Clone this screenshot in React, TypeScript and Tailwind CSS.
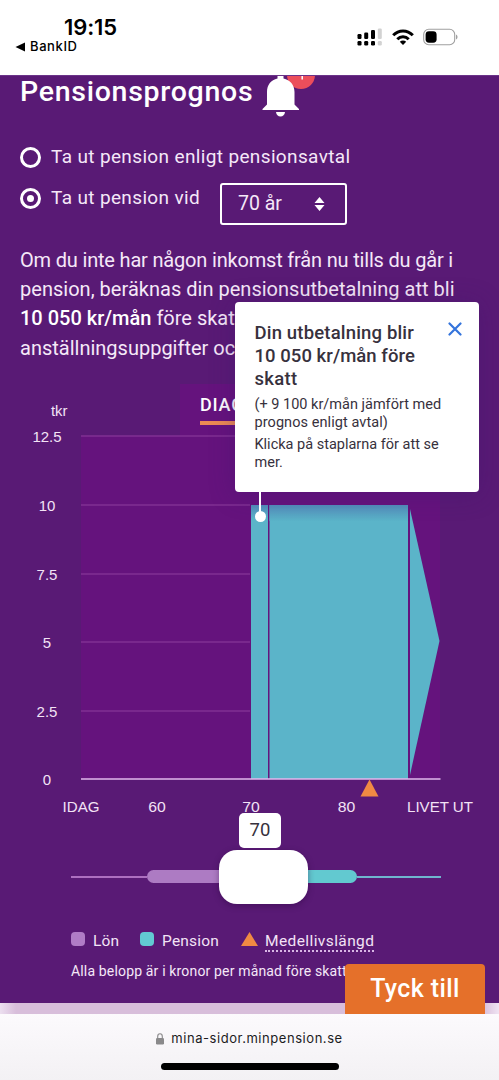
import React from 'react';

const StatusBar: React.FC = () => (
  <header className="flex h-[75px] justify-between bg-white font-[Inter,sans-serif] text-black">
    <div className="pl-[15px] pt-[13px]">
      <div className="pl-[49px] text-[22px] font-semibold leading-7 tracking-[-0.1px]">19:15</div>
      <div className="flex h-3 items-center gap-[5px] text-[13px] font-medium tracking-[0.6px]">
        <svg width="10" height="10" viewBox="0 0 10 10">
          <path d="M0.5 5 10 0.5v9z" />
        </svg>
        BankID
      </div>
    </div>
    <div className="flex gap-[9px] pr-[41px] pt-7">
      <svg width="26" height="18" viewBox="0 0 26 18">
        <rect x="0.5" y="6" width="4" height="5" rx="1.2" />
        <rect x="7.2" y="4.5" width="4" height="6.5" rx="1.2" />
        <rect x="14" y="2" width="4" height="9" rx="1.2" />
        <rect x="20.8" y="0.5" width="4" height="10.5" rx="1.2" fill="#d2d2d2" />
        <rect x="0.5" y="13" width="4" height="4.5" rx="1.2" />
        <rect x="7.2" y="13" width="4" height="4.5" rx="1.2" />
        <rect x="14" y="13" width="4" height="4.5" rx="1.2" />
        <rect x="20.8" y="13" width="4" height="4.5" rx="1.2" fill="#d2d2d2" />
      </svg>
      <svg width="22" height="18" viewBox="0 0 22 18" fill="none" stroke="#000" strokeWidth="3">
        <path d="M1.2 7.3C6.7 1.6 15.3 1.6 20.8 7.3" />
        <path d="M5.3 11.2C8.5 8 13.5 8 16.7 11.2" />
        <path d="M11 17 7.8 13.8c1.8-1.7 4.6-1.7 6.4 0z" fill="#000" stroke="none" />
      </svg>
      <svg width="35" height="18" viewBox="0 0 35 18">
        <rect x="0.7" y="1.3" width="31" height="15.4" rx="5" fill="none" stroke="#a0a0a0" strokeWidth="1.1" />
        <rect x="2.6" y="3.3" width="11" height="11.4" rx="3.4" />
        <path d="M33 6.5c2 .8 2 4.2 0 5z" fill="#a0a0a0" />
      </svg>
    </div>
  </header>
);

const Bell: React.FC = () => (
  <svg className="mt-[-2px]" width="56" height="44" viewBox="0 0 56 44">
    <circle cx="39" cy="1" r="14" fill="#ec4e5b" />
    <path d="M40.2 0v5.5" stroke="#fff" strokeWidth="1.5" />
    <path
      d="M15.5 0h6v4.5c6.5 1.3 11 6.5 11 13.5v12.5l4.500 4.500v1H.5v-1L5 30.500V18C5 11 9 5.800 15.500 4.500z"
      fill="#fff"
    />
    <path d="M14 38h9c-.4 2.800-2 4.500-4.500 4.500S14.400 40.800 14 38z" fill="#fff" />
  </svg>
);

interface RadioProps {
  label: string;
  checked?: boolean;
}

const Radio: React.FC<RadioProps> = ({ label, checked = false }) => (
  <label className="flex h-6 items-center gap-2.5">
    <span className="flex size-[21px] items-center justify-center rounded-full border-[3px] border-white">
      {checked && <span className="size-[7px] rounded-full bg-white" />}
    </span>
    <span className="whitespace-nowrap text-[19px] leading-6 tracking-[0.36px]">{label}</span>
  </label>
);

const ticks = [
  { label: '12.5', y: 56, end: 440 },
  { label: '10', y: 125, end: 250 },
  { label: '7.5', y: 194, end: 250 },
  { label: '5', y: 262, end: 250 },
  { label: '2.5', y: 331, end: 250 },
  { label: '0', y: 399, end: 0 },
];

const ages = [
  { label: 'IDAG', x: 81, width: 37 },
  { label: '60', x: 157, width: 17.5 },
  { label: '70', x: 251, width: 17.5 },
  { label: '80', x: 346.5, width: 17.5 },
  { label: 'LIVET UT', x: 440, width: 66 },
];

const PensionChart: React.FC = () => (
  <svg
    className="block font-['Liberation_Sans',sans-serif]"
    width="499"
    height="440"
    viewBox="0 0 499 440"
    fontSize="15"
    fill="#f3e3f6"
  >
    <defs>
      <linearGradient id="bar-top" x1="0" y1="0" x2="0" y2="1">
        <stop offset="0" stopColor="#528ebb" />
        <stop offset="1" stopColor="#5bb4c9" />
      </linearGradient>
    </defs>
    <rect x="180" y="4" width="199" height="52" fill="#65137d" />
    <rect x="81" y="56" width="359" height="343" fill="#65137d" />
    <text x="51" y="36" textLength="16.5" lengthAdjust="spacingAndGlyphs">tkr</text>
    {ticks.map((tick) => (
      <g key={tick.label}>
        <text x="47" y={tick.y + 6} textAnchor="middle">{tick.label}</text>
        {tick.end > 0 && <path d={`M81 ${tick.y}H${tick.end}`} stroke="#813193" strokeWidth="1.3" />}
      </g>
    ))}
    <text x="200" y="31" fontSize="18" fontWeight="500" letterSpacing="0.8" className="font-[Roboto,sans-serif]" fill="#fff">
      DIAG
    </text>
    <rect x="200" y="41" width="84" height="4" fill="#ed8b53" />

    {/* Staplar */}
    <rect x="251" y="125" width="17" height="274" fill="#5bb4c9" />
    <rect x="269.5" y="125" width="138.5" height="274" fill="#5bb4c9" />
    <rect x="251" y="125" width="17" height="14" fill="url(#bar-top)" />
    <rect x="269.5" y="125" width="138.5" height="16" fill="url(#bar-top)" />
    <path d="M410 129 439.5 261 410 395z" fill="#5bb4c9" />
    <path d="M81 399H440.5" stroke="#e2b9ec" strokeWidth="1.3" />
    <path d="m369.5 399.5 9 17h-18z" fill="#f08a43" />

    {ages.map((age) => (
      <text
        key={age.label}
        x={age.x}
        y="431.5"
        textAnchor="middle"
        textLength={age.width}
        lengthAdjust="spacingAndGlyphs"
      >
        {age.label}
      </text>
    ))}
  </svg>
);

const PayoutTooltip: React.FC = () => (
  <div className="absolute left-[234.5px] top-[226.5px] h-[190px] w-[244px] rounded bg-white px-5 pt-5 text-[#37313d] shadow-[0_2px_24px_rgba(60,20,110,0.35)]">
    <h2 className="whitespace-nowrap text-[18.5px] font-medium leading-[23px]">
      <span className="block tracking-[0.17px]">Din utbetalning blir</span>
      <span className="block tracking-[0.05px]">10 050 kr/mån före</span>
      <span className="block tracking-[0.3px]">skatt</span>
    </h2>
    <p className="mt-[5px] whitespace-nowrap text-[14.5px] leading-[18px]">
      <span className="block">(+ 9 100 kr/mån jämfört med</span>
      <span className="block tracking-[0.07px]">prognos enligt avtal)</span>
    </p>
    <p className="mt-1 whitespace-nowrap text-[14.5px] leading-[18px]">
      Klicka på staplarna för att se
      <br />
      mer.
    </p>
    <svg className="absolute right-[17px] top-5" width="14" height="14" viewBox="0 0 14 14">
      <path d="M1.5 1.5 12.5 12.5M12.5 1.5 1.5 12.5" stroke="#3474dc" strokeWidth="2.2" strokeLinecap="round" />
    </svg>
    <div className="absolute left-[24.5px] top-full h-6 w-0.5 bg-white" />
    <div className="absolute left-5 top-[209.5px] size-[11px] rounded-full bg-white" />
  </div>
);

const AgeSlider: React.FC = () => (
  <div className="flex h-[54px] items-center pl-[71px]">
    <div className="h-[2.5px] w-[76px] shrink-0 bg-[#ad6fc0]" />
    <div className="h-[13px] w-[72px] shrink-0 rounded-l-full bg-[#ad7bc3]" />
    <div className="relative z-10 h-[54px] w-[89px] shrink-0 rounded-[18px] bg-white shadow-[0_2px_6px_rgba(40,0,60,0.4)]">
      <div className="absolute bottom-[56px] left-5 h-[35px] w-[42px] rounded-[5px] bg-white text-center text-[18.5px] leading-[34px] text-[#37313d]">
        70
      </div>
    </div>
    <div className="h-[13px] w-[49px] shrink-0 rounded-r-full bg-[#62c9d0]" />
    <div className="h-[2.5px] w-[84px] shrink-0 bg-[#6fb6ce]" />
  </div>
);

const Legend: React.FC = () => (
  <div className="flex h-5 items-center pl-[71px] text-[15.5px] leading-5 text-[#f3e3f6]">
    <span className="mb-[3px] size-[14px] rounded-sm bg-[#b07cc6]" />
    <span className="ml-2 w-[47px] pt-px tracking-[0.1px]">Lön</span>
    <span className="mb-[3px] size-[14px] rounded-sm bg-[#62cad2]" />
    <span className="ml-2 w-[79px] pt-px tracking-[0.2px]">Pension</span>
    <svg className="mb-[3px]" width="17" height="14" viewBox="0 0 17 14">
      <path d="m8.5 0 8.5 14H0z" fill="#f08a43" />
    </svg>
    <span className="relative ml-[7px] whitespace-nowrap pt-px tracking-[0.4px]">
      Medellivslängd
      <span className="absolute inset-x-0 bottom-[-1px] border-b-2 border-dotted border-[#d9b6e5]" />
    </span>
  </div>
);

const BrowserBar: React.FC = () => (
  <footer className="flex h-[66px] flex-col items-center bg-gradient-to-b from-[#fcfafd] to-[#f3f1f4]">
    <div className="mt-4 flex h-[18px] items-center gap-[7px] font-[Inter,sans-serif] text-[13px] tracking-[0.55px] text-[#1c1c1e]">
      <svg width="8" height="12" viewBox="0 0 8 12">
        <path d="M1.7 6V3.5a2.300 2.700 0 0 1 4.600 0V6" fill="none" stroke="#8a898b" strokeWidth="1.1" />
        <rect y="5" width="8" height="6.5" rx="1.2" fill="#8a898b" />
      </svg>
      mina-sidor.minpension.se
    </div>
    <div className="mt-[15px] h-[7px] w-[178px] rounded-full bg-black" />
  </footer>
);

export default function App() {
  return (
    <div className="h-[1080px] w-[499px] overflow-hidden bg-white font-[Roboto,sans-serif]">
      <StatusBar />
      <main className="relative h-[939px] bg-[linear-gradient(90deg,#ecdff0,#d8bedb_16px,#d8bedb_483px,#f0e4f3)]">
        <section className="h-[928px] overflow-hidden border-t border-[#6b3389] bg-[#591a75] text-[#f5e8f8]">
          <div className="flex h-[45px] pl-5">
            <h1 className="w-[242px] whitespace-nowrap text-[28.5px] font-medium leading-[32px] tracking-[0.72px] text-white">
              Pensionsprognos
            </h1>
            <Bell />
          </div>
          <div className="pl-5 pt-6">
            <Radio label="Ta ut pension enligt pensionsavtal" />
          </div>
          <div className="mt-[14px] flex h-[43px] pl-5">
            <div className="w-[200px] pt-[3px]">
              <Radio label="Ta ut pension vid" checked />
            </div>
            <button className="flex h-[42px] w-[127px] items-center justify-between rounded-[3px] border-[2.5px] border-white pl-4 pr-5 text-[19.5px]">
              70 år
              <svg width="11" height="14" viewBox="0 0 11 14" fill="#fff">
                <path d="m5.5 0 5 6H.5zM5.5 14l-5-6h10z" />
              </svg>
            </button>
          </div>
          <p className="mt-5 whitespace-nowrap pl-5 text-[20px] leading-[29.2px]">
            <span className="block tracking-[-0.18px]">Om du inte har någon inkomst från nu tills du går i</span>
            <span className="block tracking-[0.02px]">pension, beräknas din pensionsutbetalning att bli</span>
            <span className="block">
              <strong className="font-medium text-white">10 050 kr/mån</strong> före skatt
            </span>
            <span className="block">anställningsuppgifter oc</span>
          </p>
          <div className="mt-[17px]">
            <PensionChart />
          </div>
          <div className="mt-[30px]">
            <AgeSlider />
          </div>
          <div className="mt-[27px]">
            <Legend />
          </div>
          <p className="mt-[10px] whitespace-nowrap pl-[71px] text-[14px] leading-5 tracking-[0.16px]">
            Alla belopp är i kronor per månad före skatt
          </p>
        </section>
        <PayoutTooltip />
        <button className="absolute bottom-0 right-3.5 h-[50px] w-[140px] rounded-t bg-[#e5702a] text-[25px] font-medium tracking-[0.4px] text-white">
          Tyck till
        </button>
      </main>
      <BrowserBar />
    </div>
  );
}
